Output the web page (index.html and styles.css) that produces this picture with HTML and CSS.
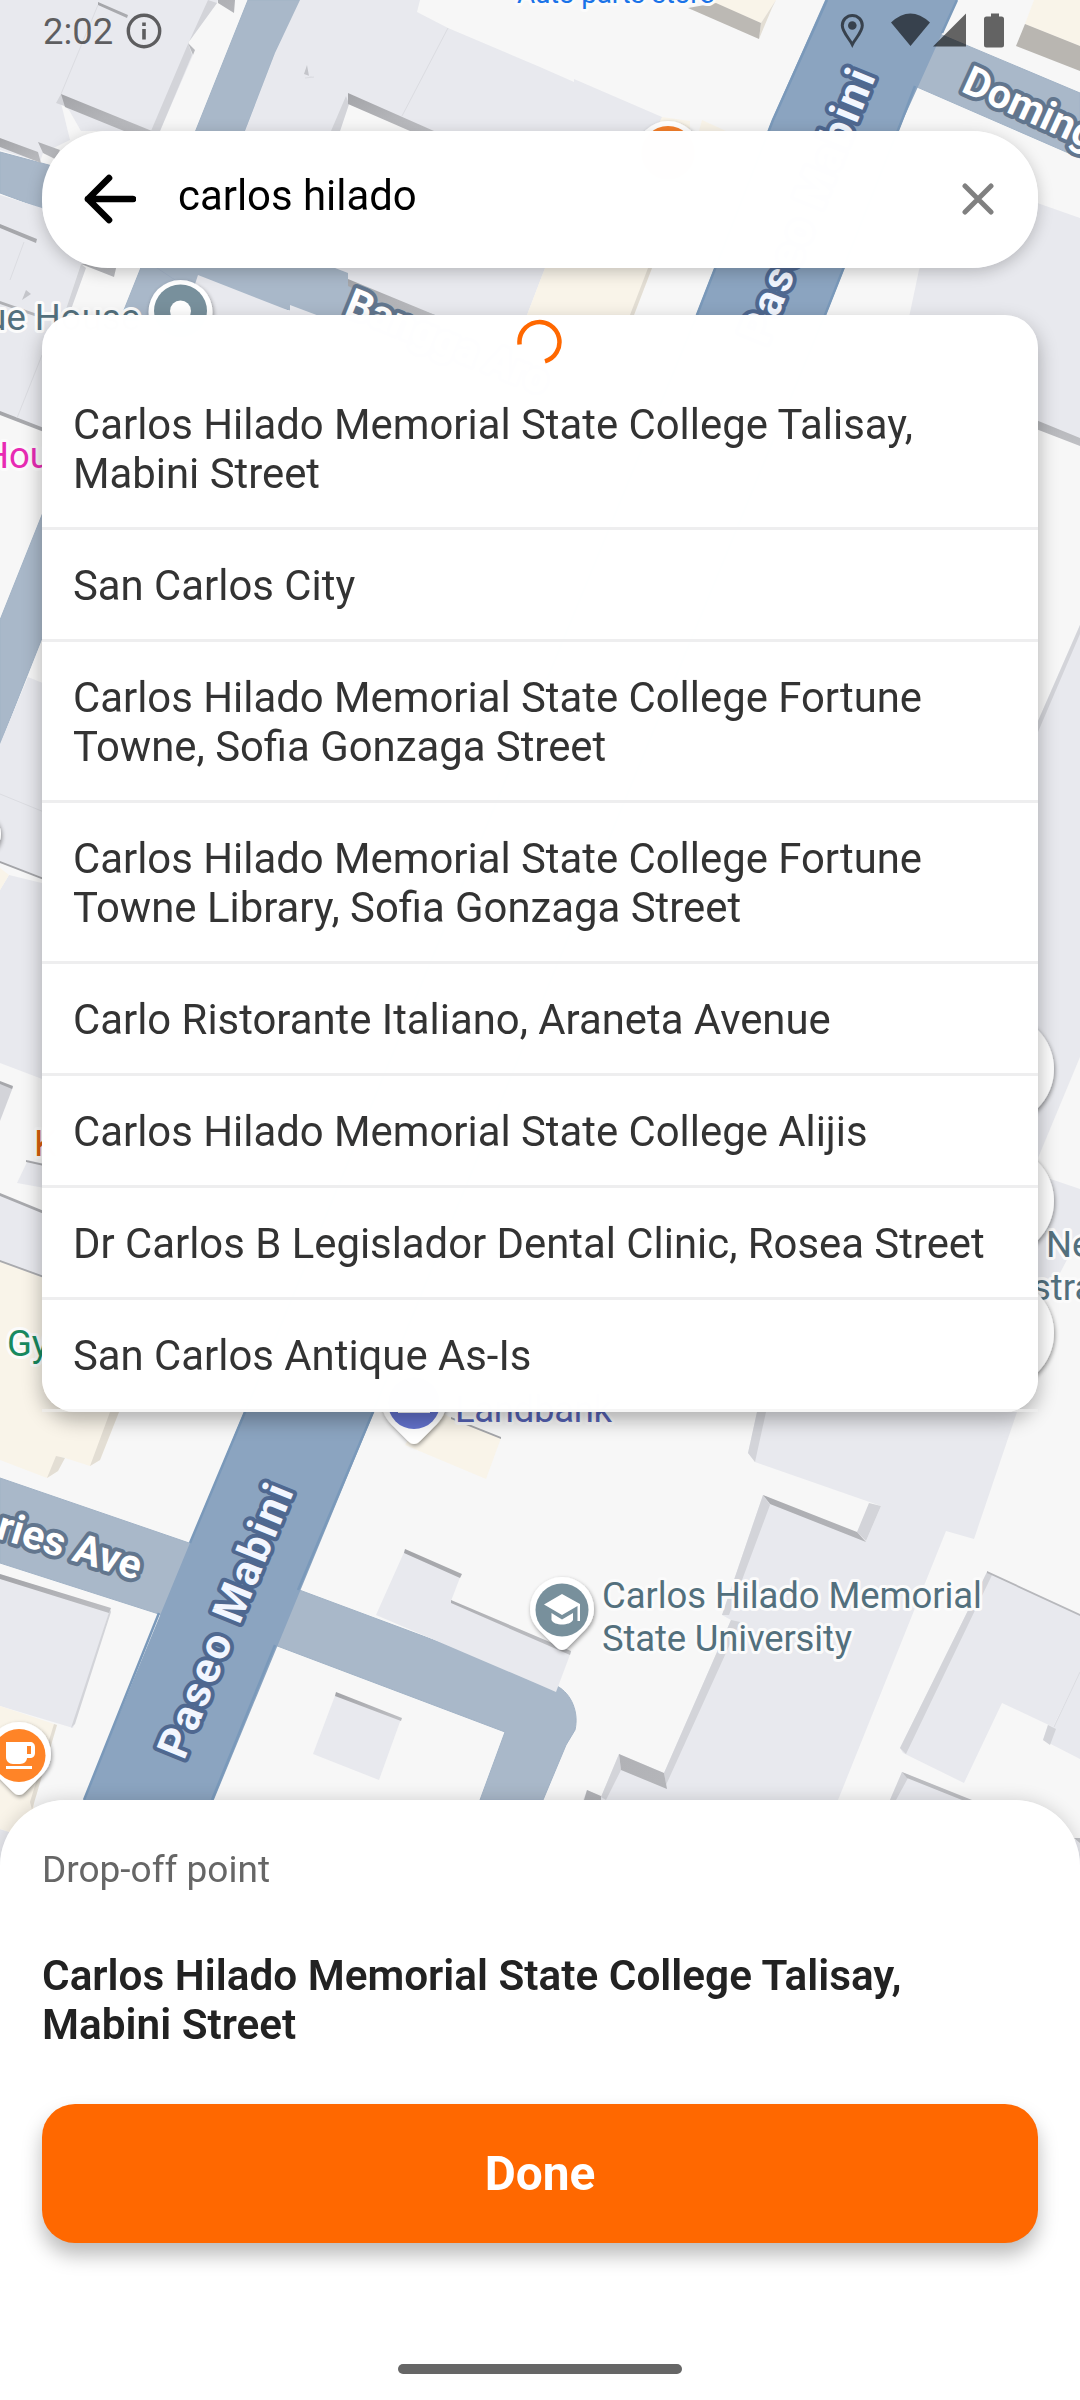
FILE: index.html
```html
<!DOCTYPE html>
<html lang="en">
<head>
<meta charset="utf-8">
<title>Drop-off point</title>
<link rel="stylesheet" href="styles.css">
</head>
<body>
<div class="screen">
  <svg class="map" viewBox="0 0 1080 2400" aria-hidden="true">
    <defs>
      <linearGradient id="wall" x1="0" y1="0" x2="1" y2="1"><stop offset="0" stop-color="#a3a4a8"/><stop offset="1" stop-color="#bfc0c4"/></linearGradient>
      <filter id="drop" x="-30%" y="-30%" width="160%" height="170%"><feDropShadow dx="1" dy="2" stdDeviation="2" flood-opacity=".4"/></filter>
      <path id="pin" d="M0-32a32 32 0 0 1 32 32c0 13-8 20-15 27L6 38c-4 4-8 4-12 0l-11-11c-7-7-15-14-15-27a32 32 0 0 1 32-32z"/>
    </defs>

    <!-- roads -->
    <g class="minor">
      <path d="M248 0H302L275 53 245 131 180 290 0 744V620L122 315z"/>
      <path d="M0 152 60 168 336 268 450 312 440 340 190 290 100 230 0 193z"/>
      <path d="M935 32 1080 93V158L910 84z"/>
      <path d="M0 1478 195 1545 165 1616 0 1563z"/>
      <path d="M294 1588 557 1686C572 1694 579 1713 575 1730L566 1745 543 1800H480L505 1732 272 1644z"/>
    </g>
    <path class="major" d="M826-2H958L903 120 826 315 374 1412 213 1802H83L244 1412 696 315 772 120z"/>
    <path class="major-edge" d="M827 0 773 120 697 315 245 1412 190 1543M159 1613 84 1800M957 0 942 33M915 86 902 120 825 315 373 1412 298 1590M275 1645 212 1800"/>

    <!-- buildings -->
    <g class="building">
      <path d="M0 0H218L217 3 188 43 193 55 160 131H81L69 110 61 103 70 140 43 153 40 162 0 150z"/>
      <path d="M0 195 42 208 100 262 81 264 64 315 50 350 42 430 0 412z"/>
      <path d="M300 0H420L417 12 448 28 540 67 574 82 574 79 662 117V131H415L349 104 340 131H245L275 53z"/>
      <path d="M198 275 290 311V305L330 320 300 350 180 330z"/>
      <path d="M348 273 335 268H545L527 315 520 360 435 315 348 285z"/>
      <path d="M919 270 950 190 1000 190 1080 218V440L1038 421 900 360z"/>
      <path d="M1038 721 1080 625V1057L1038 1158z"/>
      <path d="M1030 1172 1080 1189V1235L1030 1330z"/>
      <path d="M0 744 28 677 50 686V880L0 862z"/>
      <path d="M9 875 50 885V1082L0 1063V890z"/>
      <path d="M28 1160 50 1165V1189L17 1183z"/>
      <path d="M0 1194 50 1214V1279L0 1261z"/>
      <path d="M0 1574 110 1609 73 1728 0 1706z"/>
      <path d="M405 1550 461 1575 451 1601 571 1652 556 1692 540 1685 376 1615z"/>
      <path d="M336 1693 401 1719 379 1780 313 1754z"/>
      <path d="M757 1412 748 1453 755 1462 881 1506 866 1541 763 1495 722 1615 731 1620 664 1773 619 1754 601 1797 587 1790 583 1800H838L946 1531 974 1539 1017 1412z"/>
      <path d="M987 1572 1080 1615V1672L1053 1727 1002 1703 964 1783 903 1753 900 1748z"/>
      <path d="M1048 1725 1043 1740 1080 1759V1672L1053 1727z"/>
      <path d="M902 1772 970 1800H890z"/>
      <path d="M0 1829 40 1842V1900H0zM1076 1838H1080V1890H1060z"/>
    </g>
    <g class="shop">
      <path d="M700 0H776L761 23 688-8z"/>
      <path d="M1034 0H1080V46L1025 24z"/>
      <path d="M662 117 690 121V131H655zM702 120 726 131H699z"/>
      <path d="M545 268H652L634 315H527z"/>
      <path d="M0 868 9 875 0 890z"/>
      <path d="M0 1261 50 1279 60 1400 119 1412 100 1460 90 1466 62 1457 58 1471 47 1478 0 1460z"/>
      <path d="M430 1405 451 1418 501 1438 486 1479 405 1445z"/>
      <path d="M0 1706 57 1725 34 1800V1840L0 1829z"/>
    </g>
    <g class="face">
      <path d="M217 3 188 43 192 55 160 131H151L188 44 208 0zM61 94 56 103 70 108zM349 104 340 131H331L346 96z"/>
      <path d="M757 1412 748 1453 755 1462 766 1412zM763 1495 722 1615H729L770 1505zM731 1620 664 1773 666 1785 740 1622zM869 1503 881 1506 866 1541 857 1532zM619 1754 601 1797 606 1800 621 1770z"/>
      <path d="M987 1572 900 1748 906 1754 992 1575zM1048 1725 1043 1740 1050 1745 1056 1729zM902 1772 890 1800H896L908 1778z"/>
      <path d="M110 1609 71 1728 75 1724 111 1612zM81 264 64 315H69L86 268zM1038 721 1080 625V634L1038 732z"/>
      <path d="M0 1082 13 1087 0 1121z"/>
    </g>
    <path class="shop-face" d="M119 1412 100 1460 90 1466 110 1412zM65 1458 58 1471 47 1478 56 1456zM776 0 761 23 759 39 772 8zM652 268 634 315H630L648 268zM57 1725 32 1810 30 1802 54 1724z"/>
    <g fill="url(#wall)">
      <path d="M61 94 152 131H124L65 107z"/>
      <path d="M0 138 38 152 41 163 0 147zM38 142 60 150 55 159 43 153z"/>
      <path d="M98 2 128 15 127 18 98 5zM218 0H235L234 13 218 3zM188 43 193 55 195 50z"/>
      <path d="M348 93 434 131H410L348 104z"/>
      <path d="M348 279 440 317H410L348 286z"/>
      <path d="M81 264H117L114 277zM0 224 37 239 36 243 0 228zM0 301 43 316V319L0 304z"/>
      <path d="M0 411 44 428V432L0 415zM1036 420 1080 438V446L1036 429z"/>
      <path d="M0 1574 111 1608 109 1613 0 1579z"/>
      <path d="M405 1549 462 1574 460 1578 404 1553zM451 1600 571 1651 570 1655 451 1603z"/>
      <path d="M336 1692 402 1718 401 1721 335 1696z"/>
      <path d="M763 1495 857 1532 866 1542 770 1504zM619 1754 664 1773 667 1789 621 1770zM587 1790 601 1796V1800H584z"/>
      <path d="M902 1772 972 1800H962L907 1778zM987 1571 1080 1614V1616L987 1573zM451 1417 501 1437V1439L451 1419z"/>
      <path d="M0 861 44 878V880L0 863zM0 1081 13 1086 12 1089 0 1084zM26 1160 44 1164V1166L26 1162zM0 1193 44 1211V1214L0 1196zM0 1260 44 1276V1278L0 1262zM1074 1838H1080V1843z"/>
    </g>
    <path fill="#bcb9b4" d="M688 8 759 39 761 23 716 3z"/>
    <path fill="#b9b6b1" d="M1025 24 1080 46V71L1016 46z"/>
    <path class="seam" d="M98 5 61 94M448 28 402 116M24 242 10 280M42 355 17 418M0 794 44 812M305 78 314 77M1080 1672 1054 1727"/>
    <path fill="#c4c5ca" d="M307 65 309 76 315 78 304 74zM26 290 31 294 22 300z"/>

    <!-- street names -->
    <g class="street major-name">
      <text transform="translate(184 1761) rotate(-67.8)" textLength="291">Paseo Mabini</text>
      <text transform="translate(766 346) rotate(-67.8)" textLength="291">Paseo Mabini</text>
    </g>
    <g class="street">
      <text transform="translate(960 91) rotate(24.6)">Domingo</text>
      <text transform="translate(137 1580) rotate(16.5)" text-anchor="end">ries Ave</text>
      <text transform="translate(343 314) rotate(22)">Bangga Aro</text>
    </g>

    <!-- places -->
    <g class="place">
      <text class="blue" x="517" y="3" textLength="197">Auto parts store</text>
      <text x="140" y="329.500" text-anchor="end">ue House</text>
      <text class="pink" x="-17" y="468">Hou</text>
      <text class="orange" x="34" y="1156">K</text>
      <text class="green" x="7" y="1356">Gy</text>
      <text x="1046" y="1257">Ne</text>
      <text x="1032" y="1300">stra</text>
      <text class="indigo" x="455" y="1422" textLength="157">Landbank</text>
      <text x="602" y="1607.500" textLength="380">Carlos Hilado Memorial</text>
      <text x="602" y="1650.500" textLength="250">State University</text>
    </g>

    <!-- pins -->
    <g filter="url(#drop)" fill="#fff">
      <use href="#pin" x="180.500" y="312"/>
      <use href="#pin" x="668" y="153"/>
      <use href="#pin" x="414" y="1403"/>
      <use href="#pin" x="562" y="1609"/>
      <use href="#pin" x="19" y="1754"/>
      <circle cx="-20" cy="834" r="21"/>
    </g>
    <circle cx="180.500" cy="311" r="26.500" fill="#78909c"/><circle cx="180.500" cy="311" r="10.500" fill="#fff"/>
    <circle cx="668" cy="153" r="27" fill="#f57f2a"/>
    <circle cx="414" cy="1403" r="26" fill="#6473ce"/><path fill="#fff" d="M398 1410H430V1413H398z"/>
    <circle cx="562" cy="1610" r="26.500" fill="#78909c"/>
    <path fill="#fff" d="M562 1594 580 1604V1621H577.500V1606L562 1615 544 1604.500zM551.500 1613 562 1619.500 573 1613V1620C570 1626 554 1626 551.500 1620z"/>
    <circle cx="19" cy="1755.500" r="26.500" fill="#ff8427"/>
    <path fill="#fff" fill-rule="evenodd" d="M6 1742H30C33 1742 35 1744 35 1747V1753C35 1756 33 1758 30 1758H27C27 1761 24 1764 20 1764H13C9 1764 6 1761 6 1757zM27 1746V1754H31V1746zM6 1766H32V1769H6z"/>

    <!-- map buttons -->
    <g class="fab" filter="url(#drop)">
      <circle cx="999" cy="1069" r="55"/><circle cx="999" cy="1201" r="55"/><circle cx="999" cy="1333" r="55"/>
    </g>
  </svg>

  <header class="status">
    <span class="clock">2:02</span>
    <svg class="info" viewBox="0 0 36 36"><circle cx="18" cy="18" r="15.700" fill="none" stroke="currentColor" stroke-width="3.400"/><path fill="currentColor" d="M16.200 9.500h3.600v3.600h-3.600zM16.200 16h3.600v10.500h-3.600z"/></svg>
    <svg class="system" viewBox="0 0 166 36">
      <path fill="none" stroke="currentColor" stroke-width="3" d="M13.300 2.500a10 10 0 0 1 10 10C23.300 19 16 26 13.300 31.500 10.600 26 3.300 19 3.300 12.500a10 10 0 0 1 10-10z"/><circle cx="13.300" cy="12.500" r="4.300" fill="currentColor"/>
      <path fill="currentColor" d="M52 9.500Q71.300-8.500 91 9.500L71.500 33zM127 .500V33.500H94zM152 .500h8v3h2.500a2.500 2.500 0 0 1 2.500 2.500v26a2.500 2.500 0 0 1-2.500 2.500h-15a2.500 2.500 0 0 1-2.500-2.500v-26a2.500 2.500 0 0 1 2.500-2.500h4.500z"/>
    </svg>
  </header>

  <div class="search">
    <svg class="back" viewBox="0 0 52 50"><path fill="none" stroke="#000" stroke-width="6.600" stroke-linecap="round" stroke-linejoin="round" d="M49 25H4M25 4 4 25 25 46"/></svg>
    <span class="query">carlos hilado</span>
    <svg class="clear" viewBox="0 0 32 32"><path fill="none" stroke="#808080" stroke-width="5" stroke-linecap="round" d="M3 3 29 29M29 3 3 29"/></svg>
  </div>

  <section class="results">
    <div class="loading"><svg class="spinner" viewBox="0 0 46 46"><path fill="none" stroke="#ff6800" stroke-width="4.500" d="M2.600 25.500A20 20 0 1 1 28 42.300"/></svg></div>
    <ul class="list">
      <li>Carlos Hilado Memorial State College Talisay, Mabini Street</li>
      <li>San Carlos City</li>
      <li>Carlos Hilado Memorial State College Fortune Towne, Sofia Gonzaga Street</li>
      <li>Carlos Hilado Memorial State College Fortune Towne Library, Sofia Gonzaga Street</li>
      <li>Carlo Ristorante Italiano, Araneta Avenue</li>
      <li>Carlos Hilado Memorial State College Alijis</li>
      <li>Dr Carlos B Legislador Dental Clinic, Rosea Street</li>
      <li>San Carlos Antique As-Is</li>
    </ul>
  </section>

  <section class="sheet">
    <p class="caption">Drop-off point</p>
    <h1 class="place-name">Carlos Hilado Memorial State College Talisay, Mabini Street</h1>
    <button class="done">Done</button>
    <div class="home"></div>
  </section>
</div>
</body>
</html>
```
FILE: styles.css
```css
* { box-sizing: border-box; }

body {
  margin: 0;
  font-family: Roboto, sans-serif;
  background: #f7f7f7;
}

.screen {
  position: relative;
  display: flex;
  flex-direction: column;
  width: 1080px;
  height: 2400px;
  overflow: hidden;
  background: #f7f7f7;
}

/* Map canvas behind every panel */
.map {
  position: absolute;
  inset: 0;
  width: 1080px;
  height: 2400px;
}

.minor { fill: #a9b8c9; stroke: #a2b3c6; stroke-width: 1; }
.major { fill: #8ba4c0; }
.major-edge { fill: none; stroke: #7a99ba; stroke-width: 2.5; }
.building { fill: #e8e9ee; }
.shop { fill: #f9f4e9; }
.face { fill: #d3d4d9; }
.shop-face { fill: #e3ded4; }
.seam { fill: none; stroke: #dbdce1; stroke-width: 1; }
.fab { fill: #fdfdfd; }

.street text {
  font-size: 41px;
  font-weight: 700;
  fill: #fff;
  stroke: #62768e;
  stroke-width: 8px;
  stroke-linejoin: round;
  paint-order: stroke;
}

.major-name text {
  font-size: 43px;
  fill: #f2f6ff;
  stroke: #4f6890;
}

.place text {
  font-size: 36.5px;
  fill: #53707d;
  stroke: #fbfbfb;
  stroke-width: 6px;
  stroke-linejoin: round;
  paint-order: stroke;
}

.place .blue { fill: #1a73e8; font-size: 28px; }
.place .pink { fill: #e82bb4; }
.place .orange { fill: #d95f0c; }
.place .green { fill: #188a60; }
.place .indigo { fill: #5562b5; }

.status,
.search,
.results,
.sheet {
  position: relative;
}

.status {
  display: flex;
  align-items: center;
  height: 62px;
  padding: 0 75px 0 43px;
  color: rgba(0, 0, 0, 0.6);
}

.clock { font-size: 36.5px; }
.info { width: 36px; height: 36px; margin-left: 13px; }
.system { width: 166px; height: 36px; margin-left: auto; }

.search {
  display: flex;
  align-items: center;
  height: 137px;
  margin: 69px 42px 0;
  padding: 0 44px 1px 42px;
  border-radius: 66px;
  background: rgba(255, 255, 255, 0.996);
  box-shadow: 0 4px 16px rgba(0, 0, 0, 0.22);
}

.back { width: 52px; height: 50px; }

.query {
  flex: 1;
  margin-left: 42px;
  font-size: 41.9px;
  line-height: 49px;
  padding-bottom: 7px;
  color: #000;
}

.clear { width: 32px; height: 32px; }

.results {
  height: 1097px;
  margin: 47px 42px 0;
  border-radius: 33px;
  background: rgba(255, 255, 255, 0.996);
  box-shadow: 0 8px 20px rgba(0, 0, 0, 0.3);
}

.loading {
  display: flex;
  justify-content: center;
  height: 54px;
  padding-top: 4px;
}

.spinner { width: 46px; height: 46px; }

.list {
  margin: 0;
  padding: 0;
  list-style: none;
}

.list li {
  padding: 31px 31px 29px;
  border-bottom: 3px solid #eeeeef;
  font-size: 41.85px;
  line-height: 49px;
  color: #333;
}

.list li:last-child { border-bottom-color: rgba(238, 238, 239, 0.6); }

.sheet {
  display: flex;
  flex-direction: column;
  height: 600px;
  margin-top: auto;
  padding: 49px 42px 0;
  border-radius: 66px 66px 0 0;
  background: rgba(255, 255, 255, 0.996);
  box-shadow: 0 0 18px rgba(0, 0, 0, 0.16);
}

.caption {
  margin: 0;
  font-size: 37px;
  line-height: 42px;
  color: #666;
}

.place-name {
  margin: 60px 0 0;
  padding-right: 20px;
  font-size: 42.3px;
  font-weight: 600;
  line-height: 49px;
  color: #222;
}

.done {
  flex: none;
  height: 139px;
  margin-top: 55px;
  padding-top: 3px;
  border: 0;
  border-radius: 33px;
  background: #ff6800;
  box-shadow: 0 12px 20px rgba(0, 0, 0, 0.27);
  color: #fff;
  font: 700 47.8px/55px Roboto, sans-serif;
}

.home {
  align-self: center;
  width: 284px;
  height: 10px;
  margin-top: 121px;
  border-radius: 5px;
  background: #666;
}
```
